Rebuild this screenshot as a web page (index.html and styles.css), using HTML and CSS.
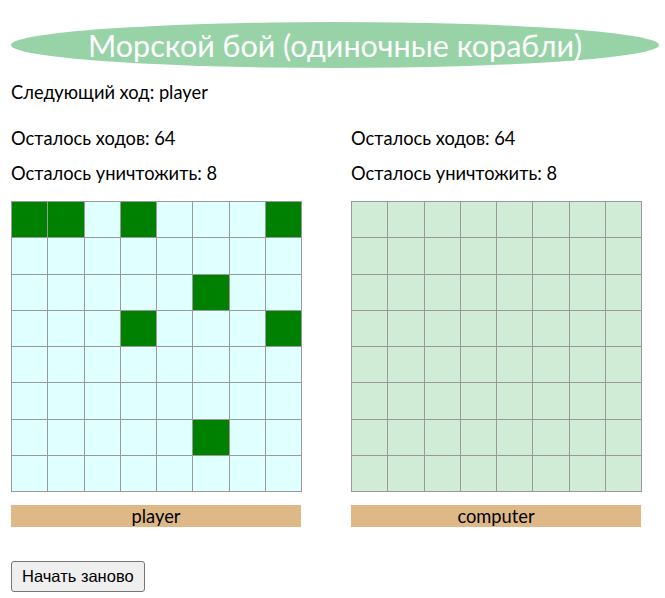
FILE: index.html
```html
<!DOCTYPE html>
<html lang="ru">
<head>
<meta charset="utf-8">
<title>Морской бой</title>
<link rel="stylesheet" href="styles.css">
</head>
<body>
<div class="page">
  <h1 class="title">Морской бой (одиночные корабли)</h1>
  <p class="turn">Следующий ход: player</p>
  <div class="boards">
    <section class="side">
      <p class="stat">Осталось ходов: 64</p>
      <p class="stat">Осталось уничтожить: 8</p>
      <div class="board board-player" id="player"></div>
      <div class="label">player</div>
    </section>
    <section class="side">
      <p class="stat">Осталось ходов: 64</p>
      <p class="stat">Осталось уничтожить: 8</p>
      <div class="board board-computer" id="computer"></div>
      <div class="label">computer</div>
    </section>
  </div>
  <button class="restart">Начать заново</button>
</div>
<script>
  var ships = [[0,0],[0,1],[0,3],[0,7],[2,5],[3,3],[3,7],[6,5]];
  function build(id, showShips) {
    var b = document.getElementById(id);
    for (var r = 0; r < 8; r++) {
      for (var c = 0; c < 8; c++) {
        var d = document.createElement('div');
        d.className = 'cell';
        if (showShips && ships.some(function (s) { return s[0] === r && s[1] === c; })) {
          d.className += ' ship';
        }
        b.appendChild(d);
      }
    }
  }
  build('player', true);
  build('computer', false);
</script>
</body>
</html>
```
FILE: styles.css
```css
html, body {
  margin: 0;
  padding: 0;
  background: #fff;
}
.page {
  padding: 22px 6px 0 11px;
  font-family: "Lato", "DejaVu Sans", sans-serif;
  color: #000;
}
.title {
  margin: 0;
  height: 46px;
  border-radius: 50%;
  background: #98d3a8;
  color: #fff;
  font-weight: normal;
  font-size: 30.5px;
  line-height: 46px;
  text-align: center;
}
.turn {
  margin: 14px 0 0;
  font-size: 18.3px;
  line-height: 20px;
}
.boards {
  display: flex;
  gap: 49px;
  margin-top: 26px;
}
.side {
  width: 291px;
}
.stat {
  margin: 0 0 15px;
  font-size: 18.3px;
  line-height: 20px;
}
.board {
  display: grid;
  grid-template-columns: repeat(8, 1fr);
  grid-template-rows: repeat(8, 1fr);
  width: 291px;
  height: 291px;
  box-sizing: border-box;
  border-top: 1px solid #999;
  border-left: 1px solid #999;
  margin-top: 18px;
}
.cell {
  border-right: 1px solid #999;
  border-bottom: 1px solid #999;
}
.board-player .cell { background: #e0ffff; }
.board-player .cell.ship { background: #008000; }
.board-computer .cell { background: #d0ecd6; }
.label {
  margin-top: 13px;
  width: 290px;
  height: 22px;
  background: #deb887;
  text-align: center;
  font-size: 18.3px;
  line-height: 22px;
}
.restart {
  margin-top: 34px;
  font-family: "Liberation Sans", Arial, sans-serif;
  font-size: 16.5px;
  padding: 5px 10px;
  background: #efefef;
  border: 1px solid #767676;
  border-radius: 3px;
  color: #000;
}
```
